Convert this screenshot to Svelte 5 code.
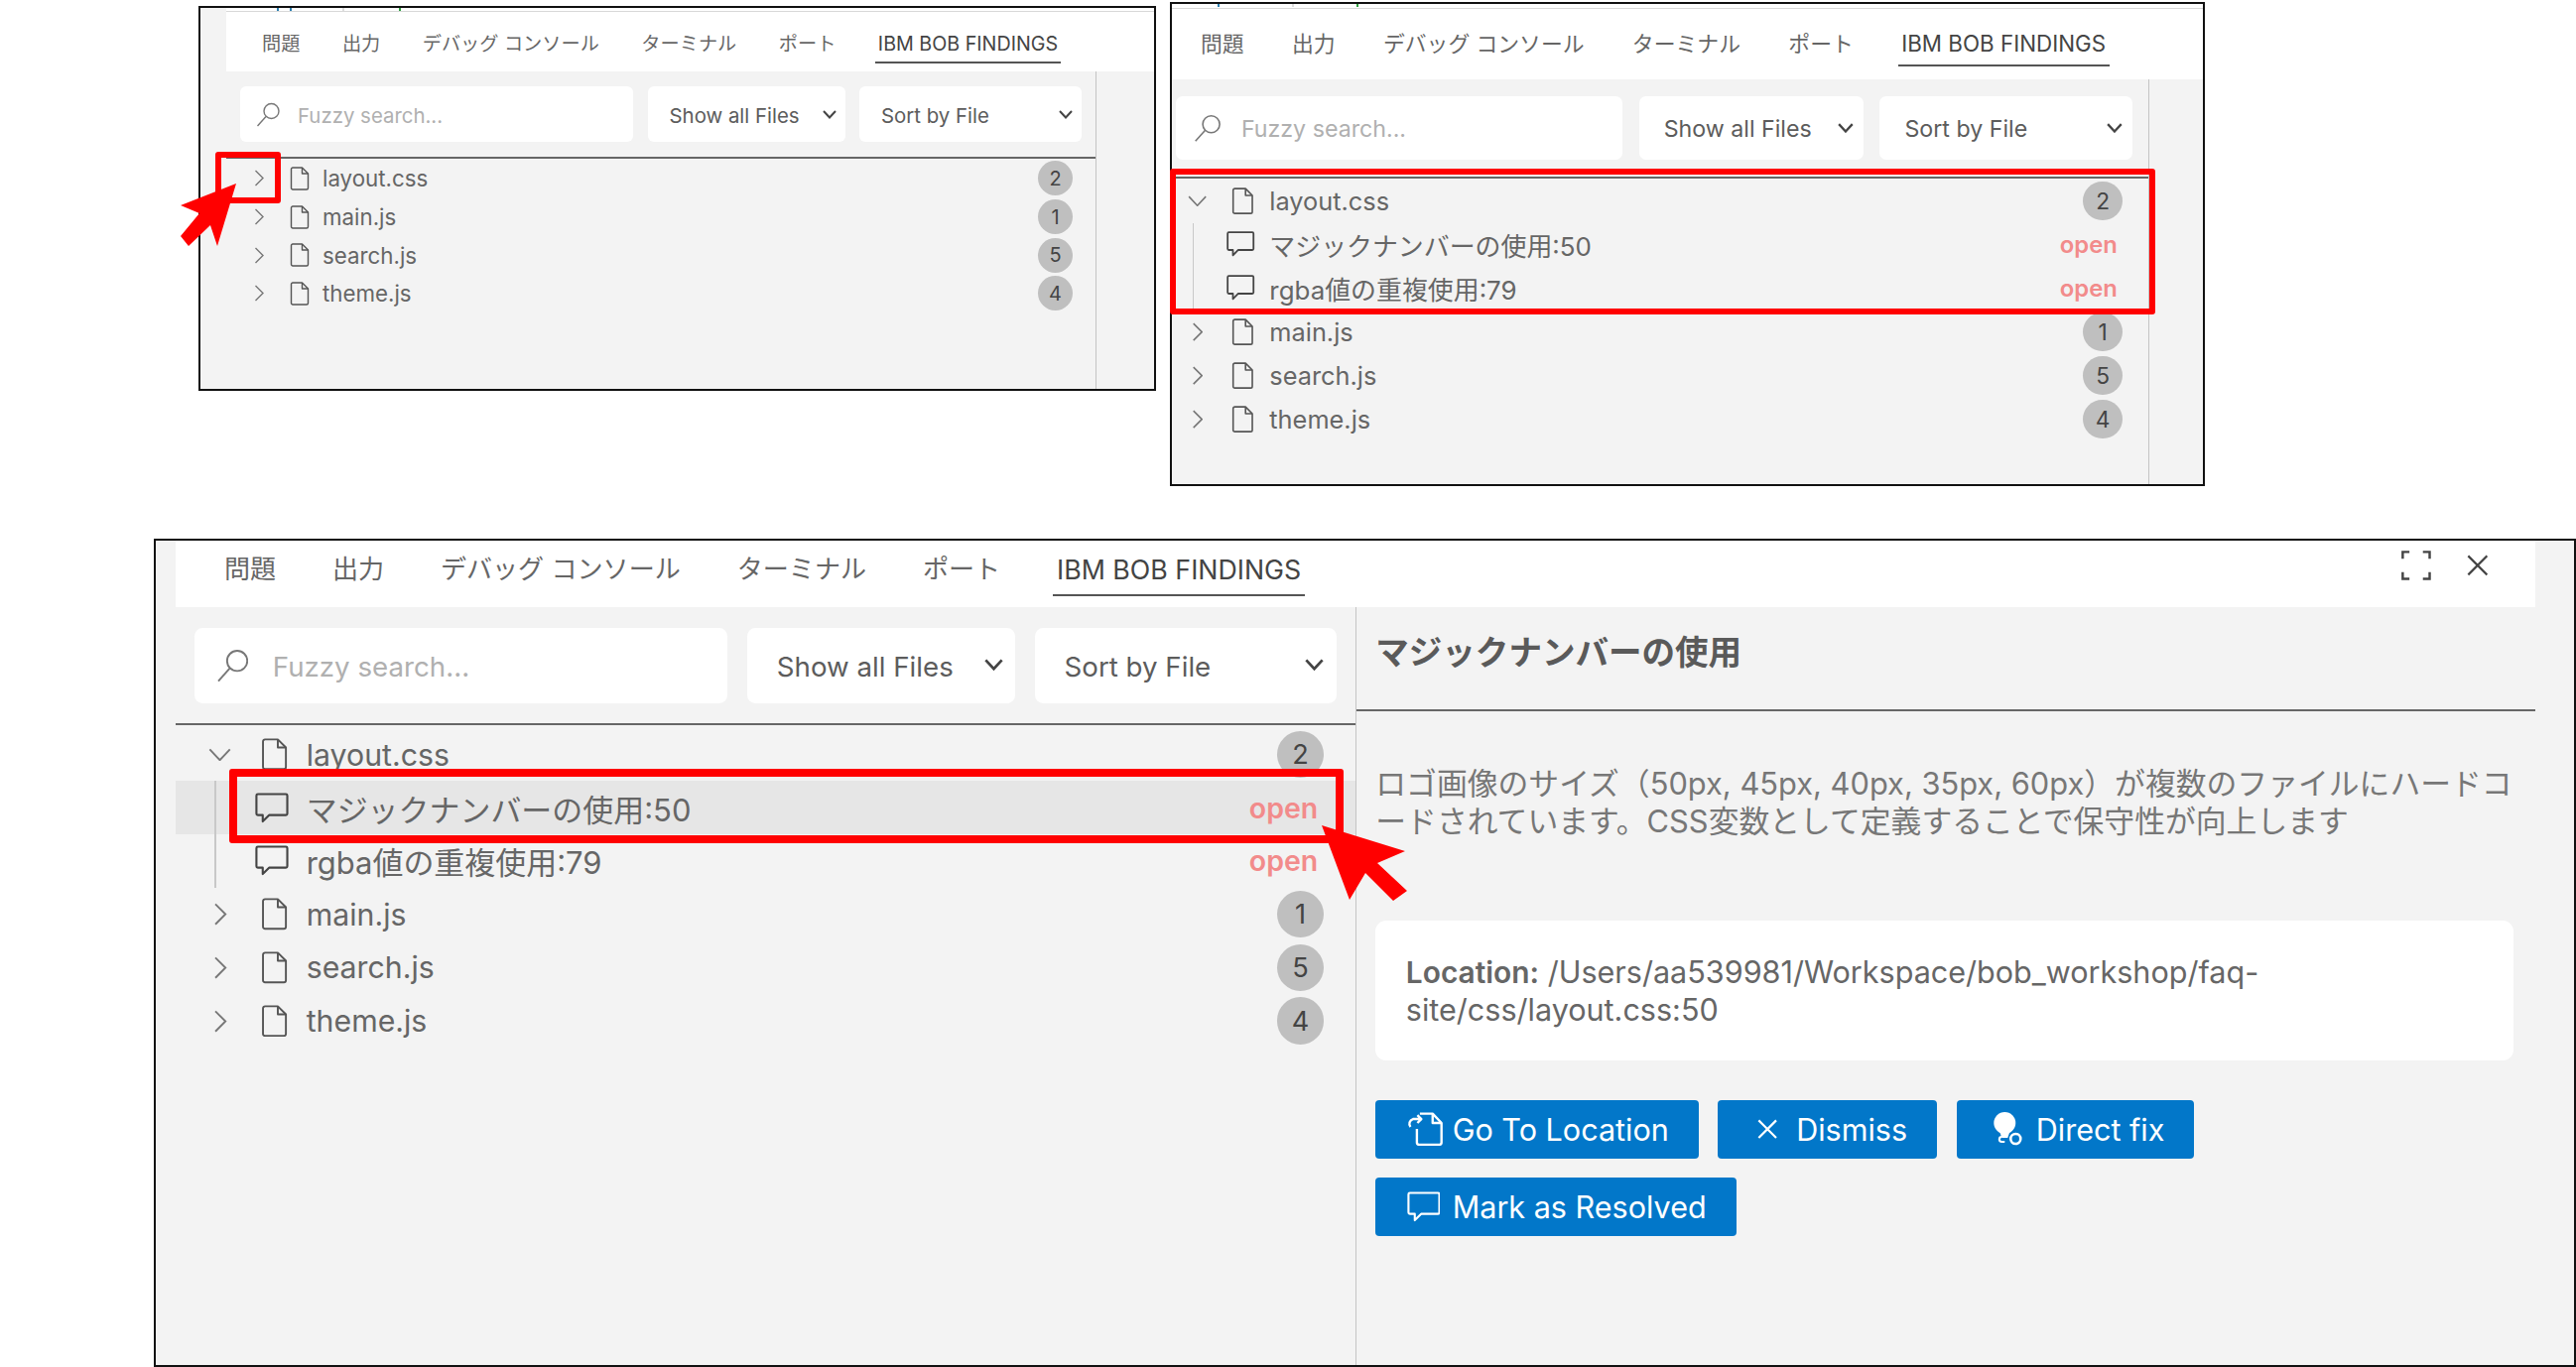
<script>
  const tabs = ['問題', '出力', 'デバッグ コンソール', 'ターミナル', 'ポート'];
  const files = [
    { name: 'layout.css', count: 2 },
    { name: 'main.js', count: 1 },
    { name: 'search.js', count: 5 },
    { name: 'theme.js', count: 4 }
  ];
  const findings = [
    { label: 'マジックナンバーの使用:50' },
    { label: 'rgba値の重複使用:79' }
  ];
</script>

{#snippet commentIcon()}
  <svg class="ic-comment" width="25" height="23" viewBox="0 0 24 22" fill="none">
    <path d="M2 1h20a1 1 0 0 1 1 1v13a1 1 0 0 1-1 1H10l-4.500 4.500V16H2a1 1 0 0 1-1-1V2a1 1 0 0 1 1-1z" stroke="currentColor" stroke-width="1.500" stroke-linejoin="round"/>
  </svg>
{/snippet}

{#snippet tabBar(showActions)}
  <div class="bar">
    {#each tabs as t}
      <span class="tab">{t}</span>
    {/each}
    <span class="tab active">IBM BOB FINDINGS</span>
    {#if showActions}
      <div class="bar-actions">
        <svg width="22" height="22" viewBox="0 0 22 22" fill="none" stroke="#444" stroke-width="1.800">
          <path d="M1 6V1h5M16 1h5v5M21 16v5h-5M6 21H1v-5"/>
        </svg>
        <svg width="16" height="16" viewBox="0 0 16 16" fill="none" stroke="#444" stroke-width="1.600">
          <path d="M1 1l14 14M15 1L1 15"/>
        </svg>
      </div>
    {/if}
  </div>
{/snippet}

{#snippet filters()}
  <div class="filters">
    <div class="search">
      <svg width="24" height="25" viewBox="0 0 24 25" fill="none" stroke="#777" stroke-width="1.400">
        <circle cx="15.500" cy="9" r="7.500"/>
        <path d="M10 14.500L1.500 24"/>
      </svg>
      <span class="placeholder">Fuzzy search...</span>
    </div>
    <div class="select sel-a">
      <span>Show all Files</span>
      <svg width="14" height="9" viewBox="0 0 14 9" fill="none" stroke="#444" stroke-width="2"><path d="M1 1l6 6.500L13 1"/></svg>
    </div>
    <div class="select sel-b">
      <span>Sort by File</span>
      <svg width="14" height="9" viewBox="0 0 14 9" fill="none" stroke="#444" stroke-width="2"><path d="M1 1l6 6.500L13 1"/></svg>
    </div>
  </div>
{/snippet}

{#snippet tree(expanded, selected)}
  <div class="tree">
    {#each files as f, i}
      <div class="row">
        <span class="chev">
          {#if expanded && i === 0}
            <svg class="down" width="17" height="10" viewBox="0 0 17 10" fill="none" stroke="#777" stroke-width="1.400"><path d="M1 1l7.500 8L16 1"/></svg>
          {:else}
            <svg width="10" height="17" viewBox="0 0 10 17" fill="none" stroke="#777" stroke-width="1.400"><path d="M1.500 1l7.500 7.500L1.500 16"/></svg>
          {/if}
        </span>
        <svg class="ic-file" width="20" height="24" viewBox="0 0 20 24" fill="none" stroke="#555" stroke-width="1.400" stroke-linejoin="round">
          <path d="M3 1h9.500L18.500 7v14.500a1.500 1.500 0 0 1-1.500 1.500H3a1.500 1.500 0 0 1-1.500-1.500v-19A1.500 1.500 0 0 1 3 1z"/>
          <path d="M12.500 1v6h6"/>
        </svg>
        <span class="name">{f.name}</span>
        <span class="badge">{f.count}</span>
      </div>
      {#if expanded && i === 0}
        <div class="children">
          {#each findings as item, j}
            <div class="row child" class:selected={selected && j === 0}>
              {@render commentIcon()}
              <span class="name">{item.label}</span>
              <span class="status">open</span>
            </div>
          {/each}
        </div>
      {/if}
    {/each}
  </div>
{/snippet}

<div class="page">
  <!-- collapsed tree -->
  <div class="win w1">
    <div class="ui">
      <div class="strip"><i class="m a"></i><i class="m b"></i><i class="m c"></i><i class="m d"></i></div>
      {@render tabBar(false)}
      <div class="body">
        <div class="left">
          {@render filters()}
          {@render tree(false, false)}
        </div>
      </div>
    </div>
  </div>

  <!-- expanded tree -->
  <div class="win w2">
    <div class="ui">
      <div class="strip"><i class="m a"></i><i class="m c"></i><i class="m d"></i></div>
      {@render tabBar(false)}
      <div class="body">
        <div class="left">
          {@render filters()}
          {@render tree(true, false)}
        </div>
      </div>
    </div>
  </div>

  <!-- detail view -->
  <div class="win w3">
    <div class="ui">
      {@render tabBar(true)}
      <div class="body">
        <div class="left">
          {@render filters()}
          {@render tree(true, true)}
        </div>
        <div class="detail">
          <div class="d-title">マジックナンバーの使用</div>
          <p class="d-text">ロゴ画像のサイズ（50px, 45px, 40px, 35px, 60px）が複数のファイルにハードコードされています。CSS変数として定義することで保守性が向上します</p>
          <div class="d-card"><b>Location:</b> <span>/Users/aa539981/Workspace/bob_workshop/faq-</span><span>site/css/layout.css:50</span></div>
          <div class="actions">
            <button class="btn">
              <svg width="27" height="25" viewBox="0 0 37 34" fill="none" stroke="#fff" stroke-width="2.400" stroke-linejoin="round">
                <path d="M10 17v14a2 2 0 0 0 2 2h21a2 2 0 0 0 2-2V11L26 1.500H13"/>
                <path d="M26 1.500V11h9"/>
                <path d="M3.500 15A5 5 0 0 1 6 7h8M10.500 3L14.500 7l-4 4"/>
              </svg>
              Go To Location
            </button>
            <button class="btn b-x">
              <svg width="15" height="15" viewBox="0 0 15 15" fill="none" stroke="#fff" stroke-width="1.600"><path d="M1 1l13 13M14 1L1 14"/></svg>
              Dismiss
            </button>
            <button class="btn b-fix">
              <svg width="24" height="25" viewBox="0 0 30 34" fill="none">
                <circle cx="11" cy="11" r="11" fill="#fff"/>
                <path d="M5 17h12l-3 9H8z" fill="#fff"/>
                <path d="M11 30H8a2.500 2.500 0 0 1 0-5" stroke="#fff" stroke-width="2"/>
                <circle cx="22" cy="27" r="5" fill="#0277c9" stroke="#fff" stroke-width="2.600"/>
              </svg>
              Direct fix
            </button>
            <button class="btn">
              <span class="wide">{@render commentIcon()}</span>
              Mark as Resolved
            </button>
          </div>
        </div>
      </div>
    </div>
  </div>

  <!-- callouts drawn over the screenshots -->
  <div class="mark m1"></div>
  <div class="mark m2"></div>
  <div class="mark m3"></div>
  <svg class="arrows" width="2596" height="1378" viewBox="0 0 2596 1378">
    <polygon fill="#ff0000" points="238,185 182,207 201,215 182,238 190,248 212,227 219,248"/>
    <polygon fill="#ff0000" points="1332,832 1416,858 1388,870 1418,898 1404,908 1376,880 1360,907"/>
  </svg>
</div>

<style>
  :global(body) {
    margin: 0;
    background: #fff;
  }

  .page {
    position: relative;
    width: 2596px;
    height: 1378px;
    overflow: hidden;
    font-family: Inter, "Noto Sans CJK JP", sans-serif;
  }

  /* Screenshots sit on a free canvas */
  .win {
    position: absolute;
    box-sizing: border-box;
    border: 2px solid #111;
    background: #f3f3f3;
    overflow: hidden;
    --row: 38.7px;
    --tree-top: 2px;
  }

  .w1 {
    left: 200px;
    top: 6px;
    width: 965px;
    height: 388px;
    padding-left: 26px;
    --tree-top: 0.5px;
  }

  .w1 .ui {
    width: 935px;
  }

  .w2 {
    left: 1179px;
    top: 2px;
    width: 1043px;
    height: 488px;
    --tree-top: 0.5px;
  }

  .w2 .ui {
    zoom: 1.137;
    margin-left: -10.500px;
    width: 924.500px;
  }

  .w2 .bar {
    height: 63px;
  }

  .w3 {
    left: 155px;
    top: 543px;
    width: 2441px;
    height: 835px;
    padding-left: 20px;
    --row: 39.550px;
  }

  .w3 .ui {
    zoom: 1.358;
    width: 1751px;
  }

  .w3 .bar {
    margin-top: -10.500px;
    gap: 41.900px;
  }

  .w3 .left {
    width: 876px;
  }

  .strip {
    position: relative;
    height: 4px;
    background: #fff;
    border-bottom: 1px solid #d8d8d8;
    box-sizing: border-box;
  }

  .m {
    position: absolute;
    top: 0;
    width: 2px;
    height: 3px;
  }

  .m.a { left: 51px; background: #2b7fb0; }
  .m.b { left: 64px; background: #2b7fb0; }
  .m.c { left: 117px; background: #ddd; }
  .m.d { left: 174px; background: #2e9e3e; }

  .bar {
    display: flex;
    align-items: flex-start;
    gap: 42.500px;
    box-sizing: border-box;
    height: 60px;
    padding: 14px 0 0 36px;
    background: #fff;
    color: #666;
    font-size: 19.200px;
  }

  .tab {
    line-height: 36px;
    white-space: nowrap;
  }

  .tab.active {
    color: #444;
    font-size: 19.700px;
    box-sizing: content-box;
    border-bottom: 2px solid #555;
    padding: 0 3px;
    margin-left: -3px;
    height: 36px;
  }

  .bar-actions {
    margin-left: auto;
    margin-right: 35px;
    display: flex;
    align-items: center;
    gap: 26px;
    height: 30px;
  }

  .body {
    display: flex;
    height: 600px;
  }

  .left {
    box-sizing: border-box;
    width: 877px;
    flex: none;
    border-right: 1px solid #c4c4c4;
  }

  .filters {
    display: flex;
    gap: 14.500px;
    height: 56px;
    padding: 15px 14px 15px 14px;
    border-bottom: 2px solid #666;
    box-sizing: content-box;
  }

  .search,
  .select {
    display: flex;
    align-items: center;
    box-sizing: border-box;
    height: 56px;
    background: #fff;
    border-radius: 6px;
    font-size: 20.400px;
    color: #5c5c5c;
  }

  .search span,
  .select span {
    padding-top: 2px;
  }

  .search {
    width: 396px;
    padding-left: 16px;
    gap: 18px;
  }

  .placeholder {
    color: #b0b0b0;
  }

  .select {
    justify-content: space-between;
    padding: 0 9px 0 22px;
    white-space: nowrap;
  }

  .sel-a { width: 199px; }
  .sel-b { width: 224px; }

  .tree {
    padding-top: var(--tree-top);
    font-size: 22.300px;
    color: #666;
  }

  .row {
    display: flex;
    align-items: center;
    height: var(--row);
    padding: 0 23px 0 28px;
    white-space: nowrap;
  }

  .chev {
    flex: none;
    width: 35.500px;
    display: flex;
    align-items: center;
  }

  .down {
    margin-left: -3.500px;
  }

  .ic-file {
    flex: none;
    margin-right: 13.500px;
  }

  .badge {
    margin-left: auto;
    flex: none;
    width: 35px;
    height: 35px;
    border-radius: 50%;
    background: #bfbfbf;
    color: #444;
    font-size: 20px;
    display: flex;
    align-items: center;
    justify-content: center;
  }

  .children {
    position: relative;
  }

  .child {
    padding: 0 27.500px 0 59px;
  }

  .child.selected {
    background: #e6e6e6;
  }

  .children::before {
    content: '';
    position: absolute;
    left: 29px;
    top: 0;
    bottom: 0;
    width: 1px;
    background: #c8c8c8;
  }

  .child .name {
    margin-left: 13px;
    font-size: 22.800px;
  }

  .ic-comment {
    flex: none;
    color: #444;
  }

  .status {
    margin-left: auto;
    color: #f28b8b;
    font-size: 21px;
    font-weight: 600;
  }

  .detail {
    flex: 1;
    min-width: 0;
  }

  .d-title {
    box-sizing: border-box;
    height: 77.500px;
    padding: 0 14.500px 12px;
    display: flex;
    align-items: center;
    border-bottom: 1.500px solid #666;
    font-size: 24.700px;
    font-weight: 700;
    color: #5a5a5a;
  }

  .d-text {
    margin: 0;
    padding: 39.500px 14.500px 59.500px;
    font-size: 22.700px;
    line-height: 28px;
    color: #777;
    line-break: anywhere;
  }

  .d-card {
    margin: 0 16px 29px 14.500px;
    padding: 24px 60px 24px 22.500px;
    background: #fff;
    border-radius: 8px;
    font-size: 22.500px;
    line-height: 28px;
    color: #666;
  }

  .d-card b {
    font-size: 22px;
    font-weight: 600;
  }

  .actions {
    display: flex;
    flex-wrap: wrap;
    gap: 14.500px;
    padding: 0 14.500px;
    width: 640px;
  }

  .btn {
    display: flex;
    align-items: center;
    gap: 7px;
    height: 43.500px;
    padding: 0 22px 0 23px;
    border: none;
    border-radius: 3px;
    background: #0277c9;
    color: #fff;
    font-family: inherit;
    font-size: 22.500px;
    white-space: nowrap;
  }

  .b-x { gap: 14px; padding-left: 29px; }
  .b-fix { gap: 8px; padding-left: 27px; }

  .wide {
    display: flex;
    color: #fff;
    margin-right: 2px;
  }

  .wide :global(.ic-comment) {
    color: #fff;
  }

  .mark {
    position: absolute;
    box-sizing: border-box;
    border: 6px solid #ff0000;
    border-radius: 3px;
  }

  .m1 { left: 217px; top: 153px; width: 66px; height: 52px; }
  .m2 { left: 1179px; top: 170px; width: 993px; height: 147px; }
  .m3 { left: 231px; top: 775px; width: 1123px; height: 75px; border-width: 8px; }

  .arrows {
    position: absolute;
    left: 0;
    top: 0;
    pointer-events: none;
  }
</style>
